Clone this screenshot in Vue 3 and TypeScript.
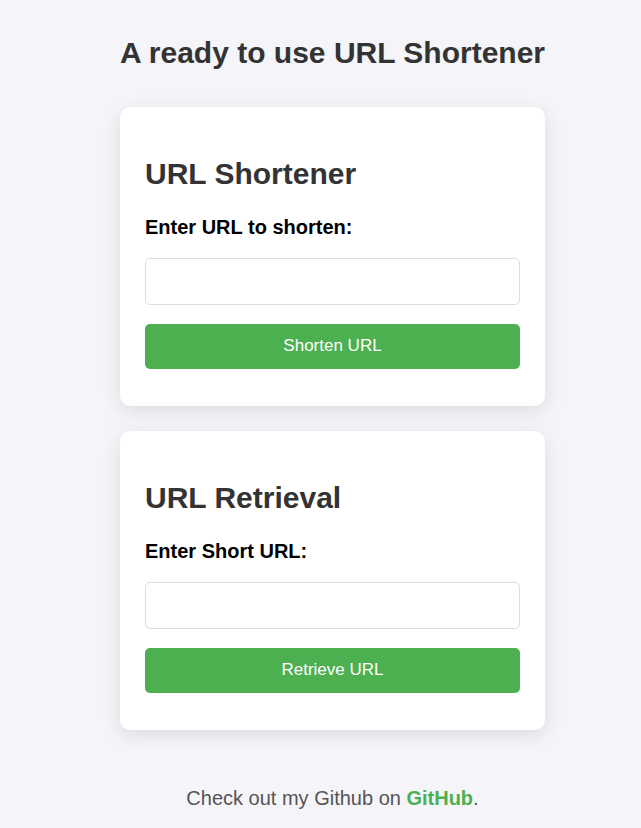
<script setup lang="ts">
import { ref } from 'vue'

const longUrl = ref('')
const shortUrl = ref('')
</script>

<template>
  <main class="page">
    <h1>A ready to use URL Shortener</h1>

    <form class="card" @submit.prevent>
      <h2>URL Shortener</h2>
      <label for="long-url">Enter URL to shorten:</label>
      <input id="long-url" v-model="longUrl" type="text" />
      <button type="submit">Shorten URL</button>
    </form>

    <form class="card" @submit.prevent>
      <h2>URL Retrieval</h2>
      <label for="short-url">Enter Short URL:</label>
      <input id="short-url" v-model="shortUrl" type="text" />
      <button type="submit">Retrieve URL</button>
    </form>

    <footer>Check out my Github on <a href="https://github.com">GitHub</a>.</footer>
  </main>
</template>

<style>
body {
  margin: 0;
  background: #f4f4f9;
}
</style>

<style scoped>
.page {
  display: flex;
  flex-direction: column;
  align-items: center;
  padding: 36px 0 18px 24px;
  font-family: "Liberation Sans", Arial, sans-serif;
  font-size: 20px;
  line-height: 24px;
}

h1,
h2 {
  margin: 0;
  color: #333;
  font-size: 30px;
  line-height: 34px;
}

h1 {
  margin-bottom: 37px;
}

.card {
  display: flex;
  flex-direction: column;
  box-sizing: border-box;
  width: 100%;
  max-width: 425px;
  margin-bottom: 25px;
  padding: 50px 25px 37px;
  border-radius: 10px;
  background: #fff;
  box-shadow: 0 5px 19px rgba(0, 0, 0, 0.1);
}

label {
  margin: 24px 0 19px;
  color: #000;
  font-weight: bold;
}

input {
  box-sizing: border-box;
  width: 100%;
  height: 47px;
  margin: 0 0 19px;
  padding: 12px;
  border: 1px solid #ddd;
  border-radius: 5px;
  font: inherit;
}

button {
  height: 45px;
  padding: 0 12px 2px;
  border: 0;
  border-radius: 5px;
  background: #4caf50;
  color: #fff;
  font-family: inherit;
  font-size: 17px;
  cursor: pointer;
}

footer {
  margin-top: 31px;
  color: #555;
}

a {
  color: #4caf50;
  font-weight: bold;
  text-decoration: none;
}
</style>
